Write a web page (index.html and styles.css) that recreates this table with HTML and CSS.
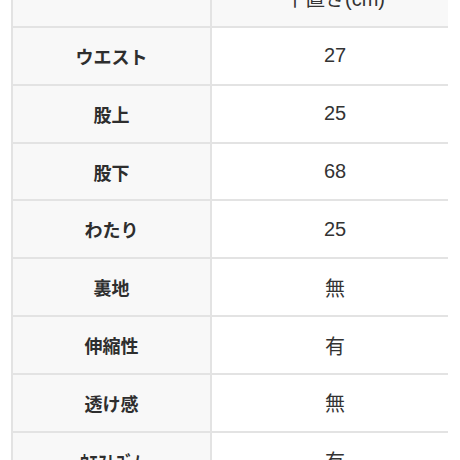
FILE: index.html
```html
<!DOCTYPE html>
<html lang="ja">
<head>
<meta charset="utf-8">
<link rel="stylesheet" href="styles.css">
</head>
<body>
<div class="page">
  <div class="table">
    <div class="row head"><div class="cell label"></div><div class="cell value">平置き(cm)</div></div>
    <div class="row"><div class="cell label">ウエスト</div><div class="cell value">27</div></div>
    <div class="row"><div class="cell label">股上</div><div class="cell value">25</div></div>
    <div class="row"><div class="cell label">股下</div><div class="cell value">68</div></div>
    <div class="row"><div class="cell label">わたり</div><div class="cell value">25</div></div>
    <div class="row"><div class="cell label">裏地</div><div class="cell value">無</div></div>
    <div class="row"><div class="cell label">伸縮性</div><div class="cell value">有</div></div>
    <div class="row"><div class="cell label">透け感</div><div class="cell value">無</div></div>
    <div class="row"><div class="cell label">ｳｴｽﾄｺﾞﾑ</div><div class="cell value">有</div></div>
  </div>
</div>
</body>
</html>
```
FILE: styles.css
```css
html, body { margin: 0; padding: 0; background: #fff; }
.page {
  width: 460px;
  height: 460px;
  overflow: hidden;
  padding-left: 11px;
  box-sizing: border-box;
}
.table {
  width: 435px;
  margin-top: -30px;
  border-left: 2px solid #e3e3e3;
  font-family: "Noto Sans CJK JP", "Noto Sans", sans-serif;
  color: #333;
}
.row {
  display: grid;
  grid-template-columns: 199px 1fr;
  height: 55.86px;
  border-bottom: 2px solid #e3e3e3;
}
.cell {
  display: flex;
  align-items: center;
  justify-content: center;
}
.label {
  background: #f8f8f8;
  border-right: 2px solid #e3e3e3;
  font-weight: 700;
  font-size: 18px;
  color: #2e2e2e;
}
.value {
  background: #fff;
  font-family: "Liberation Sans", "Noto Sans CJK JP", sans-serif;
  font-size: 20px;
  font-weight: 400;
  padding-left: 10px;
}
.head .value { background: #f8f8f8; }
```
